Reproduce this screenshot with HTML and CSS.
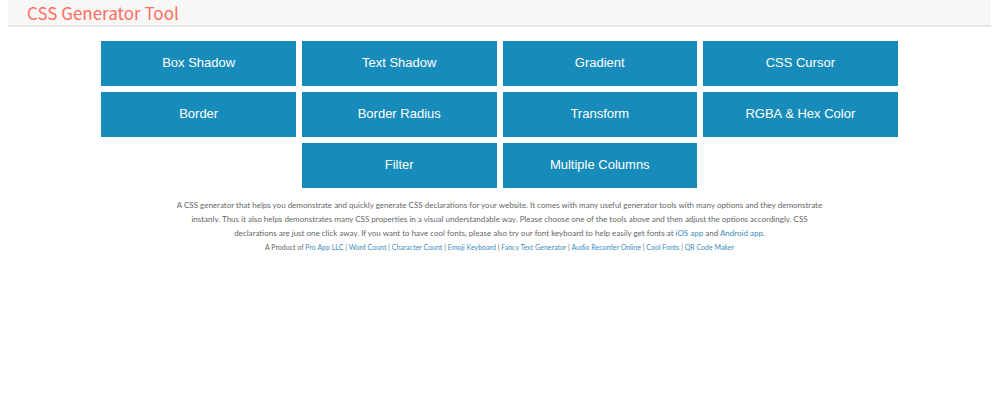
FILE: index.html
```html
<!DOCTYPE html>
<html lang="en">
<head>
<meta charset="utf-8">
<title>CSS Generator Tool</title>
<link rel="stylesheet" href="styles.css">
</head>
<body>
<header class="site-header">
  <h1 class="site-title">CSS Generator Tool</h1>
</header>
<main>
  <nav class="tools" aria-label="Tools">
    <button class="tool" type="button">Box Shadow</button>
    <button class="tool" type="button">Text Shadow</button>
    <button class="tool" type="button">Gradient</button>
    <button class="tool" type="button">CSS Cursor</button>
    <button class="tool" type="button">Border</button>
    <button class="tool" type="button">Border Radius</button>
    <button class="tool" type="button">Transform</button>
    <button class="tool" type="button">RGBA &amp; Hex Color</button>
    <button class="tool" type="button">Filter</button>
    <button class="tool" type="button">Multiple Columns</button>
  </nav>
  <p class="intro">A CSS generator that helps you demonstrate and quickly generate CSS declarations for your website. It comes with many useful generator tools with many options and they demonstrate instanly. Thus it also helps demonstrates many CSS properties in a visual understandable way. Please choose one of the tools above and then adjust the options accordingly. CSS declarations are just one click away. If you want to have cool fonts, please also try our font keyboard to help easily get fonts at <a href="#">iOS app</a> and <a href="#">Android app</a>.</p>
</main>
<footer class="footer">A Product of <a href="#">Pro App LLC</a> | <a href="#">Word Count</a> | <a href="#">Character Count</a> | <a href="#">Emoji Keyboard</a> | <a href="#">Fancy Text Generator</a> | <a href="#">Audio Recorder Online</a> | <a href="#">Cool Fonts</a> | <a href="#">QR Code Maker</a></footer>
</body>
</html>
```
FILE: styles.css
```css
* {
  box-sizing: border-box;
}

body {
  margin: 0 9px 0 8px;
  background: #fff;
  color: #666;
  font-family: Lato, sans-serif;
}

a {
  color: #3c8dbc;
  text-decoration: none;
}

.site-header {
  padding: 0 19px;
  background: #f7f7f7;
  border: solid #e7e7e7;
  border-width: 0 0 2px;
}

.site-title {
  margin: 0;
  color: #ff6c5c;
  font-family: "Noto Sans CJK SC", sans-serif;
  font-size: 17px;
  font-weight: 400;
  line-height: 25px;
}

.tools {
  display: flex;
  flex-wrap: wrap;
  justify-content: center;
  gap: 6px;
  width: 81%;
  margin: 14px auto 0;
}

.tool {
  flex: 0 0 calc((100% - 18px) / 4);
  padding: 0 0 1px;
  border: 0;
  background: #178cbb;
  color: #fff;
  font-family: "Liberation Sans", Arial, sans-serif;
  font-size: 13px;
  line-height: 44px;
}

.intro {
  width: 66%;
  margin: 10px auto 0;
  font-size: 8px;
  line-height: 14px;
  text-align: center;
}

.footer {
  font-size: 7px;
  line-height: 14px;
  text-align: center;
}
```
